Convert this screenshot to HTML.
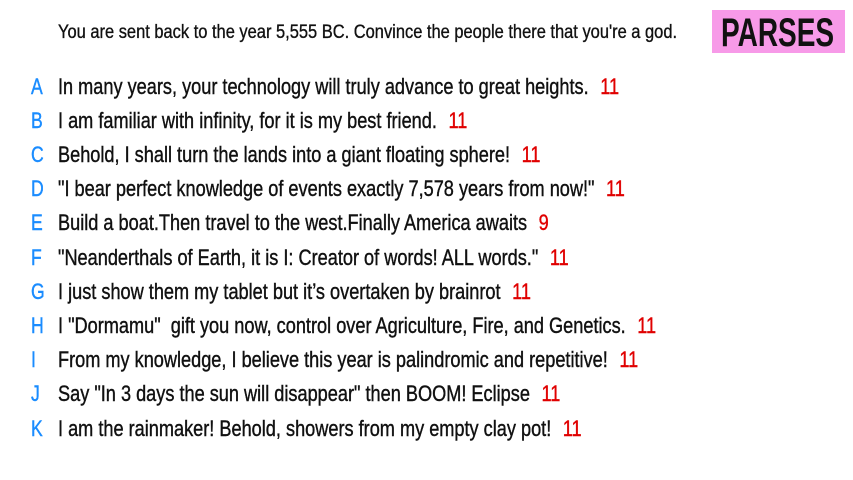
<!DOCTYPE html>
<html><head><meta charset="utf-8"><style>
body{margin:0;width:853px;height:480px;background:#fff;font-family:"Liberation Sans",sans-serif;overflow:hidden;position:relative;color:#111}
.hdr{position:absolute;left:58px;top:22px;font-size:19px;white-space:nowrap;transform:scaleX(0.866);transform-origin:left;-webkit-text-stroke:0.35px #111}
.box{position:absolute;left:712px;top:10px;width:133px;height:43px;background:#f79ae8}
.box span{position:absolute;left:9px;top:1px;font-size:40px;font-weight:bold;transform:scaleX(0.7);transform-origin:left;white-space:nowrap;color:#111}
.row{position:absolute;left:0;height:30px;white-space:nowrap;font-size:22px;-webkit-text-stroke:0.4px currentColor}
.l{position:absolute;left:31px;color:#1a8cff;transform:scaleX(0.8);transform-origin:left}
.t{position:absolute;left:58px;transform:scaleX(0.825);transform-origin:left}
.n{color:#e00000;margin-left:14px}
</style></head><body>
<div class="hdr">You are sent back to the year 5,555 BC. Convince the people there that you're a god.</div>
<div class="box"><span>PARSES</span></div>
<div class="row" style="top:74px"><span class="l">A</span><span class="t">In many years, your technology will truly advance to great heights.<span class="n">11</span></span></div>
<div class="row" style="top:108px"><span class="l">B</span><span class="t">I am familiar with infinity, for it is my best friend.<span class="n">11</span></span></div>
<div class="row" style="top:142px"><span class="l">C</span><span class="t">Behold, I shall turn the lands into a giant floating sphere!<span class="n">11</span></span></div>
<div class="row" style="top:176px"><span class="l">D</span><span class="t">"I bear perfect knowledge of events exactly 7,578 years from now!"<span class="n">11</span></span></div>
<div class="row" style="top:210px"><span class="l">E</span><span class="t">Build a boat.Then travel to the west.Finally America awaits<span class="n">9</span></span></div>
<div class="row" style="top:245px"><span class="l">F</span><span class="t">"Neanderthals of Earth, it is I: Creator of words! ALL words."<span class="n">11</span></span></div>
<div class="row" style="top:279px"><span class="l">G</span><span class="t">I just show them my tablet but it’s overtaken by brainrot<span class="n">11</span></span></div>
<div class="row" style="top:313px"><span class="l">H</span><span class="t">I "Dormamu"&nbsp; gift you now, control over Agriculture, Fire, and Genetics.<span class="n">11</span></span></div>
<div class="row" style="top:347px"><span class="l">I</span><span class="t">From my knowledge, I believe this year is palindromic and repetitive!<span class="n">11</span></span></div>
<div class="row" style="top:381px"><span class="l">J</span><span class="t">Say "In 3 days the sun will disappear" then BOOM! Eclipse<span class="n">11</span></span></div>
<div class="row" style="top:416px"><span class="l">K</span><span class="t">I am the rainmaker! Behold, showers from my empty clay pot!<span class="n">11</span></span></div>
</body></html>
